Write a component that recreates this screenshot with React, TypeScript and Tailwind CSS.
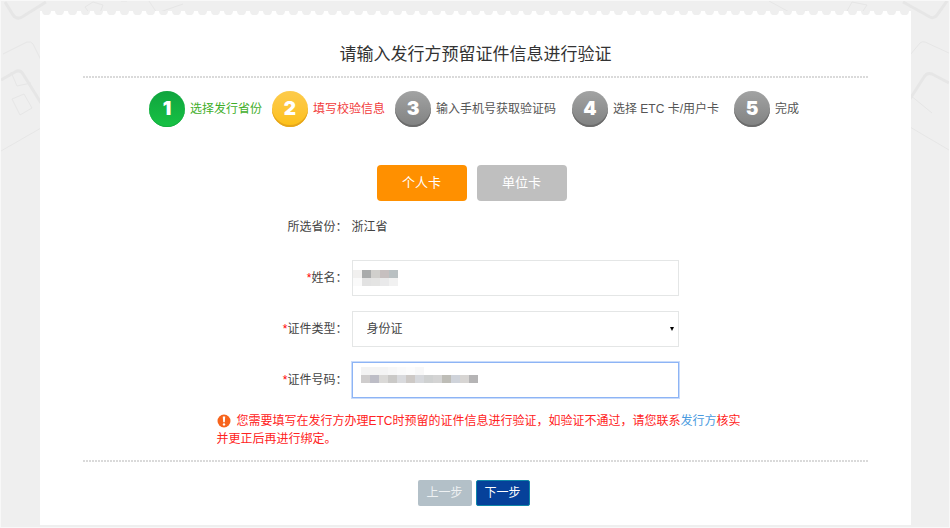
import { useState } from 'react';
import clsx from 'clsx';

type StepState = 'done' | 'active' | 'pending';

const steps: { label: string; state: StepState }[] = [
  { label: '选择发行省份', state: 'done' },
  { label: '填写校验信息', state: 'active' },
  { label: '输入手机号获取验证码', state: 'pending' },
  { label: '选择 ETC 卡/用户卡', state: 'pending' },
  { label: '完成', state: 'pending' },
];

const circleStyles: Record<StepState, string> = {
  done: 'bg-linear-to-b from-[#10a43e] to-[#17c244] shadow-[inset_0_-1px_0_#15ad40]',
  active: 'bg-linear-to-b from-[#fdcb4b] to-[#fdc010] shadow-[inset_0_-2px_0_#e5a51c]',
  pending: 'bg-linear-to-b from-[#a2a3a3] to-[#808181] shadow-[inset_0_-2px_0_#6c6c6c]',
};

const labelStyles: Record<StepState, string> = {
  done: 'text-[#3fae2a]',
  active: 'text-[#f23c3c]',
  pending: 'text-[#555]',
};

const nameMask = [
  ['bg-[#f1f0ef]', 'bg-[#a9abab]', 'bg-[#d0cfcc]', 'bg-[#c6bfbf]', 'bg-[#b9c0c2]'],
  ['bg-[#fafafa]', 'bg-[#e2e2e2]', 'bg-[#e4e4e3]', 'bg-[#e9e9ea]', 'bg-[#f1f1f1]'],
];

const numberMask = [
  ['bg-[#f3f3f3]', 'bg-[#f4f4f4]', 'bg-[#f4f4f4]', 'bg-[#f7f7f7]', 'bg-[#fafafa]', 'bg-[#fcfcfc]', 'bg-[#f8f8f8]', 'bg-white', 'bg-white', 'bg-white', 'bg-white', 'bg-white', 'bg-white'],
  ['bg-[#cfcdcd]', 'bg-[#bdbdc6]', 'bg-[#dad9d7]', 'bg-[#cac9c7]', 'bg-[#d9dadd]', 'bg-[#cdc9c6]', 'bg-[#d6d8dc]', 'bg-[#cfd1d1]', 'bg-[#d4d4d4]', 'bg-[#bebdb7]', 'bg-[#cfd3da]', 'bg-[#d7d5d3]', 'bg-[#b5b4b5]'],
];

function Mask({ rows, className }: { rows: string[][]; className: string }) {
  return (
    <div className={clsx('pointer-events-none absolute', className)} aria-hidden="true">
      {rows.map((row, r) => (
        <div key={r} className="flex">
          {row.map((color, i) => (
            <span key={i} className={clsx('h-2 w-[9px]', color)} />
          ))}
        </div>
      ))}
    </div>
  );
}

function FieldLabel({ htmlFor, children }: { htmlFor: string; children: string }) {
  return (
    <label htmlFor={htmlFor} className="text-right">
      <span className="text-[#f00]">*</span>
      {children}
    </label>
  );
}

function DottedRule() {
  return <hr className="h-0.5 border-0 bg-[repeating-linear-gradient(90deg,#dadada_0_2px,#fff_2px_3px)]" />;
}

function Backdrop() {
  return (
    <svg className="absolute inset-0 h-full w-full" fill="none" stroke="#e6e6e6" aria-hidden="true">
      <g strokeWidth="3">
        <path d="M4 1l8 13q4 5 9 2L45 1" />
        <path d="M0 79l14-8q5-3 8 2l18 29" />
      </g>
      <g strokeWidth="1">
        <path d="M2 53l24-12q4-1 6 2l8 16M11 98l12-5 8 14-12 7zM0 150l40-23M10 71l6 14 14-3" />
        <path d="M84 6l8-5 10 3-3 8-10 1zM148 0l8 12 26-9M120 0h6" />
      </g>
      <svg x="100%" overflow="visible">
        <g strokeWidth="3">
          <path d="M-46 1l27 15q4 2 7-2L-2 0" />
          <path d="M-39 98l14-22q3-5 8-3L0 82" />
        </g>
        <path d="M-39 54l10-12q2-2 5-1L0 52M-39 126L0 149M-39 94l22 18M-180 0l22 12 16-2M-102 10l5-9 15 3-6 9z" />
      </svg>
    </svg>
  );
}

export default function App() {
  const [cardType, setCardType] = useState<'personal' | 'company'>('personal');
  const [name, setName] = useState('');
  const [idType, setIdType] = useState('id');
  const [idNumber, setIdNumber] = useState('');

  const tabClass = (selected: boolean) =>
    clsx('h-9 w-[90px] rounded text-[13px] text-white', selected ? 'bg-[#ff9000]' : 'bg-[#bfbfbf]');

  return (
    <div className="relative min-h-screen border border-[#f8f8f8] bg-[#efefef] pt-[10px] pr-[38px] pb-[2px] pl-[39px] font-['Liberation_Sans','Noto_Sans_CJK_SC',sans-serif] text-xs text-[#444]">
      <Backdrop />
      <main className="relative bg-white px-[43px] pb-[19px]">
        {/* perforated top edge */}
        <div className="-mx-[43px] h-1 bg-[radial-gradient(circle_at_50%_0,#efefef_4px,#fff_5px)] bg-[length:13px_4px]" />

        <h1 className="pt-[27px] pb-2 text-center text-[17px] leading-[26px] text-[#333]">
          请输入发行方预留证件信息进行验证
        </h1>
        <DottedRule />

        <ol className="mt-[13px] grid grid-cols-[123px_123px_177px_162px_auto] justify-center pr-[3px]">
          {steps.map((step, i) => (
            <li key={step.label} className="flex items-center gap-[5px] whitespace-nowrap">
              <span
                className={clsx(
                  'flex size-9 items-center justify-center rounded-full font-[Inter,sans-serif] text-[19px] font-black text-white',
                  circleStyles[step.state],
                )}
              >
                {i + 1}
              </span>
              <span className={labelStyles[step.state]}>{step.label}</span>
            </li>
          ))}
        </ol>

        <div className="mt-[38px] flex justify-center gap-[10px] pr-2">
          <button type="button" className={tabClass(cardType === 'personal')} onClick={() => setCardType('personal')}>
            个人卡
          </button>
          <button type="button" className={tabClass(cardType === 'company')} onClick={() => setCardType('company')}>
            单位卡
          </button>
        </div>

        <form className="mt-[14px]" onSubmit={(e) => e.preventDefault()}>
          <div className="mx-auto grid w-fit grid-cols-[70px_327px] items-center gap-x-1 gap-y-[15px] pl-[5px]">
            <span className="h-[30px] text-right leading-6">所选省份：</span>
            <span className="h-[30px] leading-6">浙江省</span>

            <FieldLabel htmlFor="name">姓名：</FieldLabel>
            <div className="relative">
              <input
                id="name"
                value={name}
                onChange={(e) => setName(e.target.value)}
                className="block h-9 w-full border border-[#e4e6e6] bg-white px-[14px] outline-none"
              />
              <Mask rows={nameMask} className="top-[10px] left-[1px]" />
            </div>

            <FieldLabel htmlFor="id-type">证件类型：</FieldLabel>
            <div className="relative">
              <select
                id="id-type"
                value={idType}
                onChange={(e) => setIdType(e.target.value)}
                className="block h-9 w-full appearance-none border border-[#e4e6e6] bg-white px-[14px] outline-none"
              >
                <option value="id">身份证</option>
                <option value="passport">护照</option>
              </select>
              <span className="pointer-events-none absolute top-4 right-[5px] border-x-2 border-t-4 border-x-transparent border-t-black" />
            </div>

            <FieldLabel htmlFor="id-number">证件号码：</FieldLabel>
            <div className="relative">
              <input
                id="id-number"
                value={idNumber}
                onChange={(e) => setIdNumber(e.target.value)}
                className="block h-9 w-full border border-[#8db4f5] bg-white px-[14px] ring-1 ring-[#c9dcfb] outline-none"
              />
              <Mask rows={numberMask} className="top-[5px] left-[9px]" />
            </div>
          </div>

          <p className="mx-auto mt-[14px] w-[534px] pl-2 leading-[18px] text-[#f22]">
            <svg className="mr-[6px] inline-block size-[14px] align-[-3px]" viewBox="0 0 14 14" aria-hidden="true">
              <circle cx="7" cy="7" r="6.5" fill="#f7641c" />
              <path d="M5.8 2.6h2.4l-.4 5.6H6.2z" fill="#fff" />
              <circle cx="7" cy="10.4" r="1.2" fill="#fff" />
            </svg>
            您需要填写在发行方办理ETC时预留的证件信息进行验证，如验证不通过，请您联系
            <a href="#issuer" className="text-[#4a9be0]">发行方</a>
            核实并更正后再进行绑定。
          </p>

          <div className="mt-3">
            <DottedRule />
          </div>
          <div className="mt-[18px] flex justify-center gap-1 pr-1">
            <button type="button" className="h-[26px] w-[54px] rounded-xs bg-[#b3c0c8] text-[#eef1f3]">
              上一步
            </button>
            <button type="submit" className="h-[26px] w-[54px] rounded-xs border border-[#0f86a8] bg-[#06419a] text-white">
              下一步
            </button>
          </div>
        </form>
      </main>
    </div>
  );
}
